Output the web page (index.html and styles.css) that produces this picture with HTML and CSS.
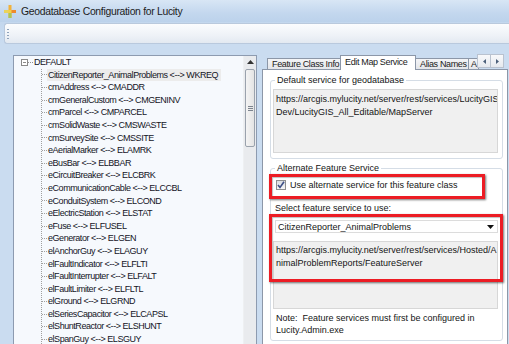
FILE: index.html
```html
<!DOCTYPE html>
<html>
<head>
<meta charset="utf-8">
<link rel="stylesheet" href="styles.css">
</head>
<body>
<div class="titlebar">
  <svg class="appicon" width="12" height="13" viewBox="0 0 12 13">
    <rect x="4.5" y="0" width="3" height="13" fill="#f2b23a"/>
    <rect x="0" y="5" width="12" height="3" fill="#f5cf48"/>
    <rect x="7.5" y="5" width="4.5" height="3" fill="#ee8a2c"/>
    <rect x="4.5" y="8" width="3" height="5" fill="#a9c65a"/>
    <rect x="0" y="5" width="4.5" height="3" fill="#e9d35c"/>
  </svg>
  <span class="title">Geodatabase Configuration for Lucity</span>
</div>
<div class="toolstrip">
  <div class="toolbar"><span class="grip"></span></div>
</div>
<div class="main">
  <div class="tree">
    <div class="tree-content">
      <div class="root"><span class="expander"></span><span class="stub"></span>DEFAULT</div>
      <ul class="children">
        <li class="sel"><span>CitizenReporter_AnimalProblems &lt;--&gt; WKREQ</span></li>
        <li><span>cmAddress &lt;--&gt; CMADDR</span></li>
        <li><span>cmGeneralCustom &lt;--&gt; CMGENINV</span></li>
        <li><span>cmParcel &lt;--&gt; CMPARCEL</span></li>
        <li><span>cmSolidWaste &lt;--&gt; CMSWASTE</span></li>
        <li><span>cmSurveySite &lt;--&gt; CMSSITE</span></li>
        <li><span>eAerialMarker &lt;--&gt; ELAMRK</span></li>
        <li><span>eBusBar &lt;--&gt; ELBBAR</span></li>
        <li><span>eCircuitBreaker &lt;--&gt; ELCBRK</span></li>
        <li><span>eCommunicationCable &lt;--&gt; ELCCBL</span></li>
        <li><span>eConduitSystem &lt;--&gt; ELCOND</span></li>
        <li><span>eElectricStation &lt;--&gt; ELSTAT</span></li>
        <li><span>eFuse &lt;--&gt; ELFUSEL</span></li>
        <li><span>eGenerator &lt;--&gt; ELGEN</span></li>
        <li><span>elAnchorGuy &lt;--&gt; ELAGUY</span></li>
        <li><span>elFaultIndicator &lt;--&gt; ELFLTI</span></li>
        <li><span>elFaultInterrupter &lt;--&gt; ELFALT</span></li>
        <li><span>elFaultLimiter &lt;--&gt; ELFLTL</span></li>
        <li><span>elGround &lt;--&gt; ELGRND</span></li>
        <li><span>elSeriesCapacitor &lt;--&gt; ELCAPSL</span></li>
        <li><span>elShuntReactor &lt;--&gt; ELSHUNT</span></li>
        <li><span>elSpanGuy &lt;--&gt; ELSGUY</span></li>
      </ul>
    </div>
    <div class="vscroll">
      <div class="sbtn"><svg width="7" height="4" viewBox="0 0 7 4"><path d="M0 4 L3.5 0 L7 4Z" fill="#333"/></svg></div>
      <div class="thumb"><span class="grips"></span></div>
    </div>
  </div>
  <div class="tabs">
    <div class="tabstrip">
      <div class="tab">Feature Class Info</div>
      <div class="tab active">Edit Map Service</div>
      <div class="tab">Alias Names</div>
      <div class="tab partial">A</div>
      <div class="tscroll">
        <div class="tsbtn"><svg width="3" height="5" viewBox="0 0 3 5"><path d="M3 0 L0 2.5 L3 5Z" fill="#4c607a"/></svg></div>
        <div class="tsbtn"><svg width="3" height="5" viewBox="0 0 3 5"><path d="M0 0 L3 2.5 L0 5Z" fill="#4c607a"/></svg></div>
      </div>
    </div>
    <div class="page">
      <fieldset class="group g1">
        <legend>Default service for geodatabase</legend>
        <div class="textbox tb1">https://arcgis.mylucity.net/server/rest/services/LucityGIS<br>Dev/LucityGIS_All_Editable/MapServer</div>
      </fieldset>
      <fieldset class="group g2">
        <legend>Alternate Feature Service</legend>
        <div class="checkrow">
          <span class="checkbox"><svg width="8" height="8" viewBox="0 0 8 8"><path d="M1 4 L3 6.5 L7 0.8" stroke="#3d4f86" stroke-width="1.6" fill="none"/></svg></span>
          <span>Use alternate service for this feature class</span>
        </div>
        <div class="label">Select feature service to use:</div>
        <div class="combo"><span>CitizenReporter_AnimalProblems</span><svg width="7" height="4" viewBox="0 0 7 4"><path d="M0 0 L7 0 L3.5 4Z" fill="#111"/></svg></div>
        <div class="textbox tb2">https://arcgis.mylucity.net/server/rest/services/Hosted/A<br>nimalProblemReports/FeatureServer</div>
        <div class="note">Note:&nbsp; Feature services must first be configured in<br>Lucity.Admin.exe</div>
      </fieldset>
      <div class="redbox r1"></div>
      <div class="redbox r2"></div>
    </div>
  </div>
</div>
</body>
</html>
```
FILE: styles.css
```css
html, body {
  margin: 0;
  padding: 0;
}
body {
  width: 509px;
  height: 344px;
  overflow: hidden;
  background: #c9dbef;
  font-family: "Liberation Sans", Arial, sans-serif;
  font-size: 9px;
  color: #141414;
}
.titlebar {
  height: 22px;
  display: flex;
  align-items: center;
  background: linear-gradient(#d8e6f5, #c3d7ee 60%, #bcd2eb);
}
.appicon {
  margin-left: 4px;
}
.title {
  margin-left: 5px;
  font-size: 10.4px;
  letter-spacing: -0.3px;
  color: #1b1b1b;
}
.toolstrip {
  padding: 1px 0 0 4px;
  height: 21px;
  background: linear-gradient(#c3d7ee, #cadcf0);
}
.toolbar {
  height: 19px;
  border: 1px solid #b9c9dd;
  border-right: none;
  border-radius: 3px 0 0 3px;
  background: linear-gradient(#fbfcfe, #eef2f7 60%, #e3e9f1);
  display: flex;
  align-items: center;
}
.grip {
  width: 2px;
  height: 11px;
  margin-left: 2px;
  background: radial-gradient(circle, #8ea2bb 0.7px, transparent 1px) 0 0 / 2px 3px;
}
.main {
  display: flex;
  padding-top: 10px;
  background: #cadcf0;
  height: 300px;
}
.tree {
  margin-left: 13px;
  margin-top: 1px;
  width: 242px;
  height: 300px;
  border: 1px solid #8d9bb0;
  border-bottom: none;
  background: #f6f9fd;
  display: flex;
  overflow: hidden;
}
.tree-content {
  flex: 1;
  color: #141425;
  letter-spacing: -0.45px;
}
.root, .children li {
  height: 12.6px;
  line-height: 12.6px;
  white-space: nowrap;
}
.root {
  display: flex;
  align-items: center;
  padding-left: 7px;
}
.expander {
  width: 5px;
  height: 5px;
  border: 1px solid #8a8a8a;
  background: linear-gradient(#8a8a8a, #8a8a8a) center / 3px 1px no-repeat, #fff;
}
.stub {
  width: 5px;
  margin-right: 1px;
  border-top: 1px dotted #909090;
}
.children {
  list-style: none;
  margin: 0 0 0 27px;
  padding: 0;
  border-left: 1px dotted #a0a0a0;
}
.children li {
  display: flex;
  align-items: center;
}
.children li::before {
  content: "";
  width: 5px;
  border-top: 1px dotted #a0a0a0;
}
.children li span {
  padding: 0 1px;
}
.children li.sel span {
  background: #ececec;
  padding-right: 3px;
}
.vscroll {
  width: 12px;
  background: #e9ebee;
  border-left: 1px solid #eef0f2;
}
.sbtn {
  height: 12px;
  display: flex;
  align-items: center;
  justify-content: center;
}
.thumb {
  margin: 1px 1px 0 1px;
  height: 76px;
  border: 1px solid #9aa2ad;
  border-radius: 2px;
  background: linear-gradient(90deg, #f4f4f4, #e4e4e4);
  display: flex;
  align-items: center;
  justify-content: center;
}
.grips {
  width: 5px;
  height: 5px;
  background: repeating-linear-gradient(#7d848e 0 1px, transparent 1px 2px);
}
.tabs {
  margin-left: 5px;
  width: 246px;
  display: flex;
  flex-direction: column;
}
.tabstrip {
  height: 15px;
  display: flex;
  align-items: flex-end;
  padding-left: 5px;
  position: relative;
  z-index: 1;
  letter-spacing: -0.35px;
}
.tab {
  height: 10px;
  line-height: 10px;
  padding: 0 4px;
  border: 1px solid #8c97a8;
  border-bottom: none;
  margin-right: -1px;
  background: linear-gradient(#f4f5f7, #e4e6ea);
  color: #1a1a1a;
  white-space: nowrap;
}
.tab:nth-child(1) { width: 64px; }
.tab:nth-child(3) { width: 44px; }
.tab.active {
  width: 66px;
  height: 14px;
  line-height: 12px;
  background: #fff;
  position: relative;
  z-index: 2;
  margin-bottom: -1px;
}
.tab.partial {
  padding: 0 1px 0 2px;
  width: 6px;
}
.tscroll {
  display: flex;
  align-self: flex-start;
}
.tsbtn {
  width: 12px;
  height: 12px;
  border: 1px solid #b9c2cf;
  margin-left: -1px;
  background: linear-gradient(#f8f9fb, #e6e9ee);
  display: flex;
  align-items: center;
  justify-content: center;
}
.page {
  position: relative;
  height: 280px;
  border: 1px solid #8c97a8;
  border-bottom: none;
  background: #fff;
}
.group {
  margin: 4px 4px 0 7px;
  border: 1px solid #d5dde6;
  border-radius: 3px;
  padding: 3px 4px 5px 2px;
  min-width: 0;
}
.group legend {
  padding: 0 2px;
  margin-left: 2px;
  line-height: 12px;
  height: 12px;
}
.g1 {
  padding-top: 3px;
}
.g2 {
  margin-top: 3px;
  padding-top: 5px;
  padding-bottom: 4px;
}
.textbox {
  background: #f0f0f0;
  border: 1px solid #d7d7d7;
  padding: 3px 0 0 2px;
  line-height: 12.5px;
  box-sizing: border-box;
  white-space: nowrap;
  overflow: hidden;
}
.tb1 {
  height: 64px;
}
.checkrow {
  display: flex;
  align-items: center;
  height: 12px;
  padding-left: 3px;
}
.checkbox {
  width: 8px;
  height: 8px;
  border: 1px solid #8e8f8f;
  background: linear-gradient(#dadde2, #f6f6f6);
  margin-right: 4px;
  display: flex;
  align-items: center;
  justify-content: center;
}
.label {
  margin-top: 11px;
  line-height: 12px;
  padding-left: 2px;
}
.combo {
  margin: 6px 0 0 2px;
  height: 13px;
  box-sizing: border-box;
  border: 1px solid #dcdcdc;
  background: #fff;
  display: flex;
  align-items: center;
  justify-content: space-between;
  padding: 0 3px 0 2px;
}
.tb2 {
  margin-top: 8px;
  height: 68px;
  padding-top: 2px;
}
.note {
  margin-top: 3px;
  line-height: 12px;
  padding-left: 3px;
}
.redbox {
  position: absolute;
  border: 3px solid #ec1c24;
  box-shadow: 1px 1px 2px rgba(0, 0, 0, 0.55), inset 1px 1px 1px rgba(0, 0, 0, 0.25);
  box-sizing: border-box;
}
.r1 {
  left: 6px;
  top: 104px;
  width: 216px;
  height: 25px;
}
.r2 {
  left: 6px;
  top: 144px;
  width: 234px;
  height: 68px;
}
```
